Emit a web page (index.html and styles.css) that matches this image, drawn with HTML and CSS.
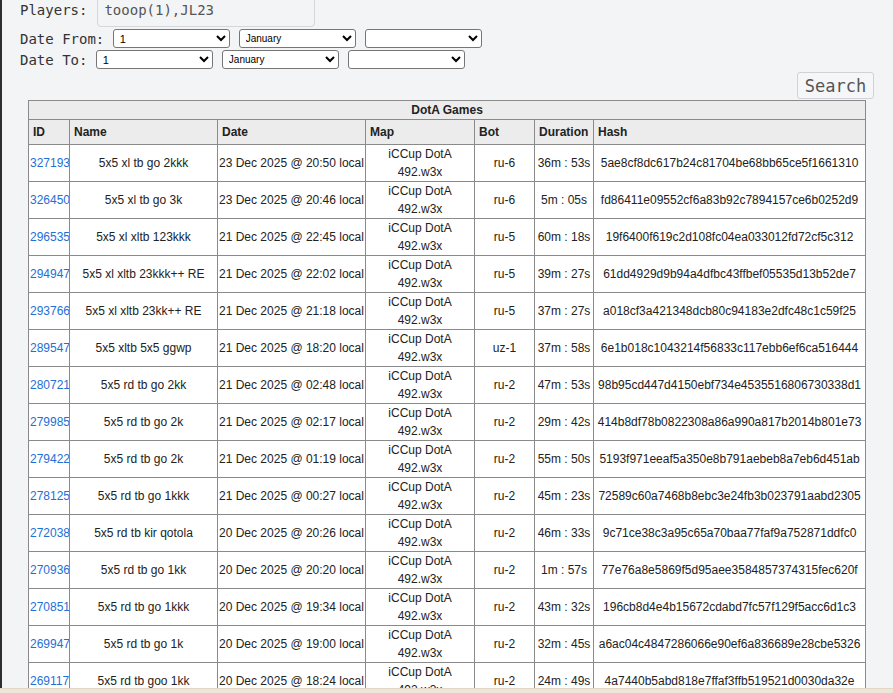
FILE: index.html
```html
<!DOCTYPE html>
<html>
<head>
<meta charset="utf-8">
<link rel="stylesheet" href="styles.css">
</head>
<body>
<div class="page">
  <form class="filters">
    <div class="row players-row">
      <span class="lbl">Players:</span>
      <input class="players-input" type="text" value="tooop(1),JL23">
    </div>
    <div class="row date-row from-row">
      <span class="lbl">Date From:</span>
      <select class="sel"><option>1</option></select>
      <select class="sel sel-month"><option>January</option></select>
      <select class="sel"><option></option></select>
    </div>
    <div class="row date-row">
      <span class="lbl">Date To:</span>
      <select class="sel"><option>1</option></select>
      <select class="sel sel-month"><option>January</option></select>
      <select class="sel"><option></option></select>
    </div>
    <div class="search-row">
      <button type="button" class="search-btn">Search</button>
    </div>
  </form>
  <table class="games">
    <colgroup>
      <col class="c-id"><col class="c-name"><col class="c-date"><col class="c-map"><col class="c-bot"><col class="c-dur"><col class="c-hash">
    </colgroup>
    <thead>
      <tr class="title-row"><th colspan="7">DotA Games</th></tr>
      <tr class="head-row"><th>ID</th><th>Name</th><th>Date</th><th>Map</th><th>Bot</th><th>Duration</th><th>Hash</th></tr>
    </thead>
    <tbody id="rows">
      <tr><td class="id"><a href="#">327193</a></td><td class="ctr">5x5 xl tb go 2kkk</td><td class="date">23 Dec 2025 @ 20:50 local</td><td class="ctr">iCCup DotA<br>492.w3x</td><td class="ctr">ru-6</td><td class="ctr">36m : 53s</td><td class="ctr">5ae8cf8dc617b24c81704be68bb65ce5f1661310</td></tr>
      <tr><td class="id"><a href="#">326450</a></td><td class="ctr">5x5 xl tb go 3k</td><td class="date">23 Dec 2025 @ 20:46 local</td><td class="ctr">iCCup DotA<br>492.w3x</td><td class="ctr">ru-6</td><td class="ctr">5m : 05s</td><td class="ctr">fd86411e09552cf6a83b92c7894157ce6b0252d9</td></tr>
      <tr><td class="id"><a href="#">296535</a></td><td class="ctr">5x5 xl xltb 123kkk</td><td class="date">21 Dec 2025 @ 22:45 local</td><td class="ctr">iCCup DotA<br>492.w3x</td><td class="ctr">ru-5</td><td class="ctr">60m : 18s</td><td class="ctr">19f6400f619c2d108fc04ea033012fd72cf5c312</td></tr>
      <tr><td class="id"><a href="#">294947</a></td><td class="ctr">5x5 xl xltb 23kkk++ RE</td><td class="date">21 Dec 2025 @ 22:02 local</td><td class="ctr">iCCup DotA<br>492.w3x</td><td class="ctr">ru-5</td><td class="ctr">39m : 27s</td><td class="ctr">61dd4929d9b94a4dfbc43ffbef05535d13b52de7</td></tr>
      <tr><td class="id"><a href="#">293766</a></td><td class="ctr">5x5 xl xltb 23kk++ RE</td><td class="date">21 Dec 2025 @ 21:18 local</td><td class="ctr">iCCup DotA<br>492.w3x</td><td class="ctr">ru-5</td><td class="ctr">37m : 27s</td><td class="ctr">a018cf3a421348dcb80c94183e2dfc48c1c59f25</td></tr>
      <tr><td class="id"><a href="#">289547</a></td><td class="ctr">5x5 xltb 5x5 ggwp</td><td class="date">21 Dec 2025 @ 18:20 local</td><td class="ctr">iCCup DotA<br>492.w3x</td><td class="ctr">uz-1</td><td class="ctr">37m : 58s</td><td class="ctr">6e1b018c1043214f56833c117ebb6ef6ca516444</td></tr>
      <tr><td class="id"><a href="#">280721</a></td><td class="ctr">5x5 rd tb go 2kk</td><td class="date">21 Dec 2025 @ 02:48 local</td><td class="ctr">iCCup DotA<br>492.w3x</td><td class="ctr">ru-2</td><td class="ctr">47m : 53s</td><td class="ctr">98b95cd447d4150ebf734e4535516806730338d1</td></tr>
      <tr><td class="id"><a href="#">279985</a></td><td class="ctr">5x5 rd tb go 2k</td><td class="date">21 Dec 2025 @ 02:17 local</td><td class="ctr">iCCup DotA<br>492.w3x</td><td class="ctr">ru-2</td><td class="ctr">29m : 42s</td><td class="ctr">414b8df78b0822308a86a990a817b2014b801e73</td></tr>
      <tr><td class="id"><a href="#">279422</a></td><td class="ctr">5x5 rd tb go 2k</td><td class="date">21 Dec 2025 @ 01:19 local</td><td class="ctr">iCCup DotA<br>492.w3x</td><td class="ctr">ru-2</td><td class="ctr">55m : 50s</td><td class="ctr">5193f971eeaf5a350e8b791aebeb8a7eb6d451ab</td></tr>
      <tr><td class="id"><a href="#">278125</a></td><td class="ctr">5x5 rd tb go 1kkk</td><td class="date">21 Dec 2025 @ 00:27 local</td><td class="ctr">iCCup DotA<br>492.w3x</td><td class="ctr">ru-2</td><td class="ctr">45m : 23s</td><td class="ctr">72589c60a7468b8ebc3e24fb3b023791aabd2305</td></tr>
      <tr><td class="id"><a href="#">272038</a></td><td class="ctr">5x5 rd tb kir qotola</td><td class="date">20 Dec 2025 @ 20:26 local</td><td class="ctr">iCCup DotA<br>492.w3x</td><td class="ctr">ru-2</td><td class="ctr">46m : 33s</td><td class="ctr">9c71ce38c3a95c65a70baa77faf9a752871ddfc0</td></tr>
      <tr><td class="id"><a href="#">270936</a></td><td class="ctr">5x5 rd tb go 1kk</td><td class="date">20 Dec 2025 @ 20:20 local</td><td class="ctr">iCCup DotA<br>492.w3x</td><td class="ctr">ru-2</td><td class="ctr">1m : 57s</td><td class="ctr">77e76a8e5869f5d95aee3584857374315fec620f</td></tr>
      <tr><td class="id"><a href="#">270851</a></td><td class="ctr">5x5 rd tb go 1kkk</td><td class="date">20 Dec 2025 @ 19:34 local</td><td class="ctr">iCCup DotA<br>492.w3x</td><td class="ctr">ru-2</td><td class="ctr">43m : 32s</td><td class="ctr">196cb8d4e4b15672cdabd7fc57f129f5acc6d1c3</td></tr>
      <tr><td class="id"><a href="#">269947</a></td><td class="ctr">5x5 rd tb go 1k</td><td class="date">20 Dec 2025 @ 19:00 local</td><td class="ctr">iCCup DotA<br>492.w3x</td><td class="ctr">ru-2</td><td class="ctr">32m : 45s</td><td class="ctr">a6ac04c4847286066e90ef6a836689e28cbe5326</td></tr>
      <tr><td class="id"><a href="#">269117</a></td><td class="ctr">5x5 rd tb goo 1kk</td><td class="date">20 Dec 2025 @ 18:24 local</td><td class="ctr">iCCup DotA<br>492.w3x</td><td class="ctr">ru-2</td><td class="ctr">24m : 49s</td><td class="ctr">4a7440b5abd818e7ffaf3ffb519521d0030da32e</td></tr>
    </tbody>
  </table>
</div>
<div class="bottom-bar"></div>
</body>
</html>
```

FILE: styles.css
```css
html, body {
  margin: 0;
  padding: 0;
  background: #2e2e2e;
}
body {
  overflow: hidden;
  height: 693px;
}
.page {
  margin-left: 2px;
  background: #f3f4f6;
  min-height: 693px;
  overflow: hidden;
}
.filters {
  padding-left: 18px;
  font-family: "DejaVu Sans Mono", monospace;
  font-size: 14px;
  color: #333;
}
.row {
  display: flex;
  align-items: center;
  white-space: pre;
}
.players-row {
  margin-top: -7px;
  height: 34px;
}
.lbl {
  margin-right: 8.4px;
}
.players-row .lbl {
  margin-right: 10px;
}
.players-input {
  box-sizing: border-box;
  width: 218px;
  height: 34px;
  border: 1px solid #d4d6da;
  border-radius: 4px;
  background: #f3f4f6;
  font-family: "DejaVu Sans Mono", monospace;
  font-size: 14px;
  color: #555;
  padding: 0 6px;
  outline: none;
}
.date-row {
  height: 21px;
}
.from-row {
  margin-top: 1px;
}
.sel {
  box-sizing: border-box;
  width: 117px;
  height: 19px;
  margin-right: 9px;
  font-family: "Liberation Sans", Arial, sans-serif;
  font-size: 11px;
  color: #000;
  background: #fff;
  border: 1px solid #767676;
  border-radius: 3px;
  padding: 0 2px;
}
.sel-month {
  font-size: 10px;
}
.search-row {
  display: flex;
  justify-content: flex-end;
  padding-right: 19px;
  margin-top: 2px;
}
.search-btn {
  box-sizing: border-box;
  width: 77px;
  height: 27px;
  font-family: "DejaVu Sans Mono", monospace;
  font-size: 17px;
  color: #555;
  background: #f5f6f8;
  border: 1px solid #d0d2d6;
  border-radius: 3px;
  padding: 0;
}
.games {
  margin: 1px 0 0 26px;
  width: 837px;
  table-layout: fixed;
  border-collapse: collapse;
  font-family: "Liberation Sans", Arial, sans-serif;
  font-size: 12px;
  color: #222;
  background: #fff;
}
.c-id { width: 41px; }
.c-name { width: 148px; }
.c-date { width: 148px; }
.c-map { width: 109px; }
.c-bot { width: 60px; }
.c-dur { width: 59px; }
.c-hash { width: 272px; }
.games th, .games td {
  border: 1px solid #8a8a8a;
  line-height: 18px;
  padding: 0;
  white-space: nowrap;
  overflow: hidden;
}
.games th {
  background: #ececec;
  font-weight: bold;
  color: #222;
}
.title-row th {
  text-align: center;
  height: 18px;
}
.head-row th {
  text-align: left;
  padding: 3px 0 3px 4px;
}
.games td {
  height: 36px;
}
.games td.id {
  padding-left: 1px;
  text-align: left;
}
.games td.id a {
  color: #1e6fd6;
  text-decoration: none;
}
.games td.date {
  padding-left: 1px;
  text-align: left;
}
.games td.ctr {
  text-align: center;
}
.bottom-bar {
  position: fixed;
  left: 0;
  right: 0;
  bottom: 0;
  height: 4px;
  background: #efe6da;
  border-top: 1px solid #e2d6c6;
}
```
